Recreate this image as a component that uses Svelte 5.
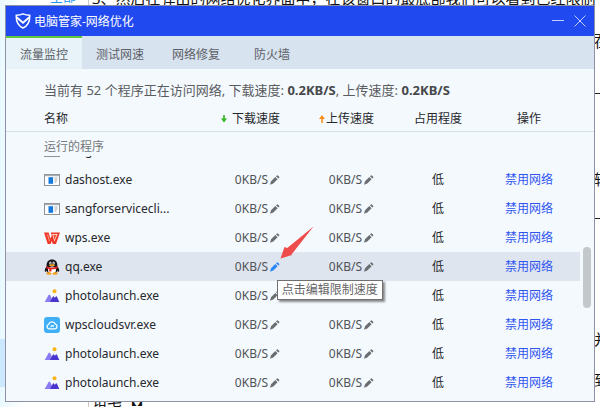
<script>
  const tabs = ["流量监控", "测试网速", "网络修复", "防火墙"];

  let activeTab = $state("流量监控");

  const programs = [
    { name: "sangforservicecli...", icon: "window" },
    { name: "dashost.exe", icon: "window" },
    { name: "sangforservicecli...", icon: "window" },
    { name: "wps.exe", icon: "wps" },
    { name: "qq.exe", icon: "qq", hovered: true },
    { name: "photolaunch.exe", icon: "photo" },
    { name: "wpscloudsvr.exe", icon: "cloud" },
    { name: "photolaunch.exe", icon: "photo" },
    { name: "photolaunch.exe", icon: "photo" },
  ];

  // what sticks out of the document to the right of the window
  const docRules = [34, 93, 218];
  const docChars = [
    { text: "在", top: 31 },
    { text: "轻", top: 169 },
    { text: "并", top: 329 },
    { text: "到", top: 370 },
  ];
</script>

{#snippet programIcon(kind)}
  <svg class="icon" viewBox="0 0 16 16" aria-hidden="true">
    {#if kind === "window"}
      <rect x="0.5" y="2.5" width="15" height="11" fill="#fff" stroke="#8d9296" />
      <path d="M1 3.5h14" stroke="#a9adb0" stroke-width="1.4" />
      <rect x="4.5" y="5.2" width="4.6" height="6.6" fill="#1478dc" />
      <path d="M10.5 6h3M10.5 8h3M10.5 10h2" stroke="#a8a8a8" />
    {:else if kind === "wps"}
      <path d="M0 2.5h4.6l1.800 6 1.400-3-1-3H16L12 14H8.800L7.800 11 6.600 14H3.700z" fill="#f0392b" />
      <path d="M8.200 4h5.400l-3.200 7.600z" fill="#fff4ef" />
      <path d="M9.200 4.700h3.400l-2.200 5.200z" fill="#f4552f" />
      <path d="M3.500 4.500l2 6.500" stroke="#ffb9a8" stroke-width="0.800" />
    {:else if kind === "qq"}
      <path d="M2.6 7.6C2.2 2.6 4.6.5 8 .5s5.800 2.100 5.400 7.100c1.500 1.700 2.100 3.400 1.700 5-.4.6-1.200-.2-1.600-.9-.3 1-1 1.800-1.500 2.200H4c-.5-.4-1.200-1.200-1.500-2.200-.4.7-1.200 1.500-1.600.9-.4-1.600.2-3.300 1.700-5z" fill="#17171b" />
      <ellipse cx="8" cy="11" rx="4" ry="3.600" fill="#fff" />
      <ellipse cx="6.400" cy="3.900" rx="1.100" ry="1.500" fill="#fff" />
      <ellipse cx="9.600" cy="3.900" rx="1.100" ry="1.500" fill="#fff" />
      <circle cx="6.700" cy="4.100" r="0.500" fill="#000" />
      <circle cx="9.300" cy="4.100" r="0.500" fill="#000" />
      <ellipse cx="8" cy="6.200" rx="3" ry="0.900" fill="#f6a21a" />
      <path d="M2.600 7.300C6 9 10 9 13.400 7.300l.3 1.900c-2 .9-4.500 1.200-6.200 1.100v2.300H5.200v-2.600l-2.900-.8z" fill="#e4251f" />
      <ellipse cx="4.900" cy="14.500" rx="2.700" ry="1.200" fill="#f6a21a" />
      <ellipse cx="11.100" cy="14.500" rx="2.700" ry="1.200" fill="#f6a21a" />
    {:else if kind === "photo"}
      <circle cx="10.500" cy="3.200" r="2" fill="#fbb315" />
      <path d="M.7 14L4.500 7.200q.9-1.300 1.700 0L9.500 14z" fill="#8b7bf2" />
      <path d="M6 14l3.200-6 1.600 1.800 1.100-1.300q.8-.7 1.200.4L15.300 14z" fill="#4a35cf" />
    {:else}
      <rect width="16" height="16" rx="3" fill="#3fb0f6" />
      <path d="M5 11.800a2.200 2.200 0 0 1-.4-4.300 3.500 3.500 0 0 1 6.600-.5 2.500 2.500 0 0 1 0 4.800zM7 9.600q1.200-1.600 2.600-.6" fill="none" stroke="#fff" stroke-width="1.300" stroke-linecap="round" />
    {/if}
  </svg>
{/snippet}

{#snippet speed(hovered)}
  <span class="speed">
    0KB/S
    <button class="edit" class:active={hovered} aria-label="点击编辑限制速度">
      <svg viewBox="0 0 12 12" aria-hidden="true">
        <path d="M3 7.300L7.300 3l2.300 2.300L5.300 9.600 2 10.800zM8 2.300l.9-.9q.5-.4.9 0l1.400 1.400q.4.4 0 .9l-.9.900z" fill="currentColor" />
      </svg>
    </button>
    {#if hovered}
      <svg class="pointer" viewBox="0 0 34 33" aria-hidden="true">
        <path d="M33.500.5L11.500 28.500 12 29 .5 32.500 4.500 21l2.800 1z" fill="#ee4b4b" />
      </svg>
      <span class="tooltip" role="tooltip">点击编辑限制速度</span>
    {/if}
  </span>
{/snippet}

<div class="desktop">
  <div class="backdrop" aria-hidden="true">
    <div class="side">
      <span class="side-link">全部</span>
      <div class="side-current"></div>
    </div>
    <div class="doc">
      <p>3、然后在弹出的网络优化界面中，在该窗口的最底部我们可以看到已经限制</p>
      <p>铅笔【】</p>
    </div>
    {#each docRules as top}
      <div class="doc-rule" style="top: {top}px"></div>
    {/each}
    {#each docChars as c}
      <span class="doc-char" style="top: {c.top}px">{c.text}</span>
    {/each}
  </div>

  <main class="window">
    <header class="titlebar">
      <svg class="logo" viewBox="0 0 16 16" aria-hidden="true">
        <path d="M8 .9c2 1 4.300 1.400 6.700 1.400.4 6-1.700 10.200-6.700 12.700C3 12.500.9 8.300 1.300 2.300 3.700 2.300 6 1.900 8 .9z" fill="none" stroke="#fff" stroke-width="1.500" />
        <path d="M1.600 4.200L8 9.700l6.400-5.500" fill="none" stroke="#fff" stroke-width="1.900" />
      </svg>
      <h1>电脑管家-网络优化</h1>
      <button class="win-btn" aria-label="最小化">
        <svg viewBox="0 0 12 12"><path d="M0 5.500h12" stroke="currentColor" /></svg>
      </button>
      <button class="win-btn" aria-label="关闭">
        <svg viewBox="0 0 12 12"><path d="M.5.5l11 11M11.500.5l-11 11" stroke="currentColor" /></svg>
      </button>
    </header>

    <nav class="tabs">
      {#each tabs as tab}
        <button class:active={tab === activeTab} onclick={() => (activeTab = tab)}>{tab}</button>
      {/each}
    </nav>

    <p class="summary">
      当前有 52 个程序正在访问网络, 下载速度: <b>0.2KB/S</b>, 上传速度: <b>0.2KB/S</b>
    </p>

    <div class="head-wrap">
      <table>
        <colgroup>
          <col /><col class="c-speed" /><col class="c-speed" /><col class="c-usage" /><col class="c-action" />
        </colgroup>
        <thead>
          <tr>
            <th class="name">名称</th>
            <th class="rate">
              <button class="sort down">
                <svg viewBox="0 0 6 8" aria-hidden="true"><path d="M3 0v5" stroke="#2fb41c" stroke-width="1.600" /><path d="M0 3.500h6L3 7.500z" fill="#2fb41c" /></svg>
                下载速度
              </button>
            </th>
            <th class="rate">
              <button class="sort up">
                <svg viewBox="0 0 6 8" aria-hidden="true"><path d="M3 8V3" stroke="#f88f16" stroke-width="1.600" /><path d="M0 4h6L3 0z" fill="#f88f16" /></svg>
                上传速度
              </button>
            </th>
            <th>占用程度</th>
            <th>操作</th>
          </tr>
        </thead>
      </table>
    </div>

    <h2>运行的程序</h2>

    <div class="list">
      <table class="programs">
        <colgroup>
          <col /><col class="c-speed" /><col class="c-speed" /><col class="c-usage" /><col class="c-action" />
        </colgroup>
        <tbody>
          {#each programs as p}
            <tr class:hovered={p.hovered}>
              <td class="name">
                <div class="program">
                  {@render programIcon(p.icon)}
                  <span>{p.name}</span>
                </div>
              </td>
              <td class="rate">{@render speed(p.hovered)}</td>
              <td class="rate">{@render speed(false)}</td>
              <td class="usage">低</td>
              <td><button class="block">禁用网络</button></td>
            </tr>
          {/each}
        </tbody>
      </table>
      <div class="scrollbar"><div class="thumb"></div></div>
    </div>
  </main>
</div>

<style>
  :global(body) {
    margin: 0;
    background: #fff;
  }
  .desktop {
    position: relative;
    min-height: 100vh;
    box-sizing: border-box;
    padding: 5px 5px 4px;
    overflow: hidden;
    font-family: "Noto Sans", "Noto Sans CJK SC", sans-serif;
    font-size: 12px;
    color: #26282b;
  }
  button {
    font: inherit;
    color: inherit;
    background: none;
    border: 0;
    padding: 0;
    cursor: pointer;
  }

  /* page behind the window */
  .backdrop {
    position: absolute;
    inset: 0;
    display: flex;
    overflow: hidden;
    font-size: 15px;
    line-height: 20px;
    color: #111;
  }
  .side {
    position: relative;
    width: 88px;
    flex: none;
    background: linear-gradient(90deg, #e9f9ff, #fff 24px);
    border-right: 1px solid #c9c9c9;
  }
  .side-link {
    position: absolute;
    top: -14px;
    left: 50px;
    font-size: 13px;
    color: #2596ee;
  }
  .side-current {
    position: absolute;
    top: 339px;
    left: 0;
    width: 100%;
    height: 48px;
    background: #cbe8ff;
  }
  .doc {
    flex: 1;
    display: flex;
    flex-direction: column;
    justify-content: space-between;
    margin: -12px 0 -2px 3px;
    white-space: nowrap;
  }
  .doc p {
    margin: 0;
  }
  .doc-rule {
    position: absolute;
    right: 0;
    width: 20px;
    height: 1px;
    background: #222;
  }
  .doc-char {
    position: absolute;
    left: calc(100% - 6px);
  }

  .window {
    position: relative;
    background: #f4f9fe;
    border: 1px solid #8d90a6;
  }
  .titlebar {
    display: flex;
    align-items: center;
    height: 30px;
    padding: 0 8px 0 9px;
    background: #204aef;
    color: #fff;
  }
  .logo {
    width: 16px;
    height: 16px;
  }
  h1 {
    flex: 1;
    margin: 0 0 0 3px;
    font-size: 12px;
    font-weight: 400;
  }
  .win-btn {
    width: 12px;
    height: 12px;
    margin-left: 10px;
    color: #c3cffc;
  }
  .win-btn svg {
    display: block;
  }

  .tabs {
    display: flex;
    height: 33px;
    background: #d8e3f0;
    color: #5c6066;
  }
  .tabs button {
    width: 76px;
    border-top: 2px solid transparent;
  }
  .tabs button.active {
    background: #e7f3f8;
    border-top-color: #62c83a;
  }

  .summary {
    margin: 0;
    padding: 11px 38px 10px;
    font-size: 13px;
    line-height: 20px;
    color: #5a5c5e;
    white-space: nowrap;
  }
  .summary b {
    color: #46484a;
  }

  table {
    width: 100%;
    table-layout: fixed;
    border-collapse: collapse;
  }
  .c-speed {
    width: 94px;
  }
  .c-usage {
    width: 80px;
  }
  .c-action {
    width: 102px;
  }
  th,
  td {
    padding: 0;
    text-align: center;
    font-weight: 400;
    line-height: 18px;
    white-space: nowrap;
  }
  .name {
    padding-left: 38px;
    text-align: left;
  }
  .rate {
    padding-right: 24px;
    text-align: right;
  }
  .head-wrap {
    padding-right: 14px;
    border-bottom: 1px solid #d5e3e6;
  }
  th {
    height: 21px;
    vertical-align: top;
  }
  .sort {
    display: inline-flex;
    align-items: center;
    gap: 5px;
    height: 18px;
    vertical-align: top;
  }
  .sort.up {
    gap: 1px;
  }
  .sort svg {
    width: 6px;
    height: 8px;
  }

  h2 {
    margin: 0;
    padding: 6px 38px 0;
    font-size: 12px;
    font-weight: 400;
    line-height: 18px;
    height: 18px;
    color: #74787b;
  }
  .list {
    display: flex;
    align-items: flex-start;
    overflow: hidden;
    padding-bottom: 4px;
  }
  .programs {
    flex: 1;
    /* the list is scrolled part of a row */
    margin-top: -20px;
  }
  .programs td {
    height: 29px;
  }
  .hovered {
    background: #dfe5ef;
  }
  .program {
    display: flex;
    align-items: center;
    gap: 5px;
  }
  .icon {
    width: 16px;
    height: 16px;
    flex: none;
  }
  .speed {
    position: relative;
    display: inline-flex;
    align-items: center;
    color: #505356;
  }
  .edit {
    width: 12px;
    height: 12px;
    color: #6b6e70;
  }
  .edit.active {
    color: #2c86f8;
  }
  .edit svg {
    display: block;
  }
  .pointer {
    position: absolute;
    left: 100%;
    bottom: 17px;
    width: 34px;
    height: 33px;
  }
  .tooltip {
    position: absolute;
    top: 22px;
    left: 42px;
    z-index: 1;
    padding: 0 4px;
    background: #fff;
    border: 1px solid #707070;
    box-shadow: 2px 2px 2px #8a8a8a;
    color: #666;
  }
  .block {
    color: #2f55f0;
  }
  .scrollbar {
    width: 14px;
    flex: none;
    display: flex;
    justify-content: center;
  }
  .thumb {
    width: 8px;
    height: 61px;
    margin-top: 91px;
    border-radius: 4px;
    background: #c3c8ca;
  }
</style>
